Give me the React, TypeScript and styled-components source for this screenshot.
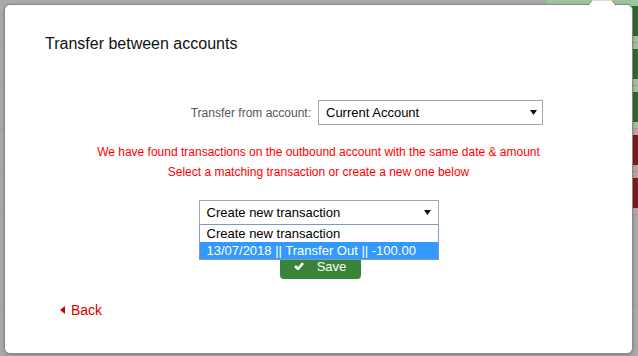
import React from "react";
import styled, { createGlobalStyle } from "styled-components";

const Global = createGlobalStyle`
  html, body { margin: 0; padding: 0; }
  body {
    font-family: "Liberation Sans", Arial, sans-serif;
    background: #a9a9a9;
  }
`;

const Screen = styled.div`
  position: relative;
  width: 638px;
  height: 356px;
  overflow: hidden;
  background: #a9a9a9;
`;

const Backdrop = styled.div`
  display: flex;
  flex-direction: column;
`;

type Tone = "ok" | "bad" | "none";

const BgRow = styled.div<{ $h?: number }>`
  height: ${(p) => p.$h ?? 42}px;
  border-bottom: 1px solid #9f9f9f;
  display: flex;
  justify-content: flex-end;
`;

const ActionCell = styled.div<{ $tone: Tone }>`
  width: 91px;
  display: flex;
  align-items: center;
  justify-content: flex-end;
  background: ${(p) =>
    p.$tone === "ok" ? "#9dc49d" : p.$tone === "bad" ? "#c4a1a1" : "transparent"};
`;

const ActionBtn = styled.div<{ $tone: Tone }>`
  width: 40px;
  height: 30px;
  background: ${(p) => (p.$tone === "ok" ? "#2c6a2c" : "#7a1c1c")};
`;

const Dialog = styled.div`
  position: absolute;
  top: 4px;
  left: 4px;
  width: 629px;
  height: 350px;
  box-sizing: border-box;
  background: #fff;
  border: 1px solid #8a8a8a;
  border-radius: 6px;
  box-shadow: 0 1px 3px rgba(0, 0, 0, 0.25);
  padding: 29px 40px 0;
  display: flex;
  flex-direction: column;
`;

const Notch = styled.svg`
  position: absolute;
  left: 583px;
  top: -5px;
  width: 28px;
  height: 6px;
`;

const Title = styled.h4`
  margin: 0;
  font-size: 16px;
  font-weight: normal;
  line-height: 20px;
  color: #111;
`;

const FormRow = styled.div`
  margin-top: 46px;
  height: 25px;
  display: flex;
  align-items: center;
  gap: 7px;
`;

const Label = styled.label`
  flex: none;
  width: 266px;
  text-align: right;
  font-size: 12px;
  line-height: 14px;
  color: #555;
`;

const SelectBox = styled.div<{ $w: number; $padR: number }>`
  position: relative;
  flex: none;
  width: ${(p) => p.$w}px;
  height: 25px;
  box-sizing: border-box;
  border: 1px solid #a6a6a6;
  background: #fff;
  padding: 0 ${(p) => p.$padR}px 0 7px;
  display: flex;
  align-items: center;
  justify-content: space-between;
  font-size: 13px;
  line-height: 23px;
  color: #000;
`;

const Warning = styled.div`
  margin-top: 17px;
  text-align: center;
  font-size: 12px;
  line-height: 20px;
  color: #f00;
`;

const Picker = styled.div`
  margin-top: 18px;
  align-self: center;
  position: relative;
  z-index: 2;
`;

const OptionList = styled.div`
  position: absolute;
  top: 24px;
  left: 0;
  right: 0;
  border: 1px solid #8098c4;
  background: #fff;
`;

const Option = styled.div<{ $active?: boolean }>`
  height: 17px;
  line-height: 17px;
  padding-left: 7px;
  font-size: 13px;
  white-space: nowrap;
  color: ${(p) => (p.$active ? "#fff" : "#000")};
  background: ${(p) => (p.$active ? "#3399ff" : "#fff")};
`;

const SaveButton = styled.button`
  margin: 28px 0 0 3px;
  align-self: center;
  width: 81px;
  height: 26px;
  border: none;
  border-radius: 4px;
  background: #3a843a;
  color: #fff;
  font-family: "Liberation Sans", Arial, sans-serif;
  font-size: 13px;
  display: flex;
  align-items: center;
  justify-content: center;
  gap: 13px;
  padding: 0;
`;

const BackLink = styled.a`
  margin-top: 21px;
  padding-left: 15px;
  display: flex;
  align-items: center;
  gap: 6px;
  font-size: 14px;
  line-height: 20px;
  color: #d40000;
  text-decoration: none;
`;

const Arrow = () => (
  <svg width="7" height="5" viewBox="0 0 7 5">
    <polygon points="0,0 7,0 3.5,5" fill="#111" />
  </svg>
);

const Check = () => (
  <svg width="10" height="8" viewBox="0 0 10 8">
    <path d="M1 4 L4 7 L9 1.2" stroke="#fff" strokeWidth="2.6" fill="none" strokeLinejoin="miter" />
  </svg>
);

const Caret = () => (
  <svg width="5" height="8" viewBox="0 0 5 8">
    <polygon points="5,0 5,8 0,4" fill="#cc0000" />
  </svg>
);

const rows: Tone[] = ["ok", "ok", "ok", "bad", "bad"];

export default function App() {
  return (
    <Screen>
      <Global />
      <Backdrop>
        {rows.map((t, i) => (
          <BgRow key={i}>
            <ActionCell $tone={t}>
              <ActionBtn $tone={t} />
            </ActionCell>
          </BgRow>
        ))}
        <BgRow $h={90} />
        <BgRow $h={50} />
      </Backdrop>
      <Dialog>
        <Notch viewBox="0 0 28 6">
          <polygon points="0,6 4,0.5 24,0.5 28,6" fill="#fff" />
          <polyline points="0,5.5 4,0.5" stroke="#8a8a8a" strokeWidth="1" fill="none" />
          <polyline points="24,0.5 28,5.5" stroke="#8a8a8a" strokeWidth="1" fill="none" />
        </Notch>
        <Title>Transfer between accounts</Title>
        <FormRow>
          <Label>Transfer from account:</Label>
          <SelectBox $w={225} $padR={5}>
            <span>Current Account</span>
            <Arrow />
          </SelectBox>
        </FormRow>
        <Warning>
          We have found transactions on the outbound account with the same date &amp; amount
          <br />
          Select a matching transaction or create a new one below
        </Warning>
        <Picker>
          <SelectBox $w={240} $padR={7}>
            <span>Create new transaction</span>
            <Arrow />
          </SelectBox>
          <OptionList>
            <Option>Create new transaction</Option>
            <Option $active>13/07/2018 || Transfer Out || -100.00</Option>
          </OptionList>
        </Picker>
        <SaveButton>
          <Check />
          <span>Save</span>
        </SaveButton>
        <BackLink href="#">
          <Caret />
          <span>Back</span>
        </BackLink>
      </Dialog>
    </Screen>
  );
}
